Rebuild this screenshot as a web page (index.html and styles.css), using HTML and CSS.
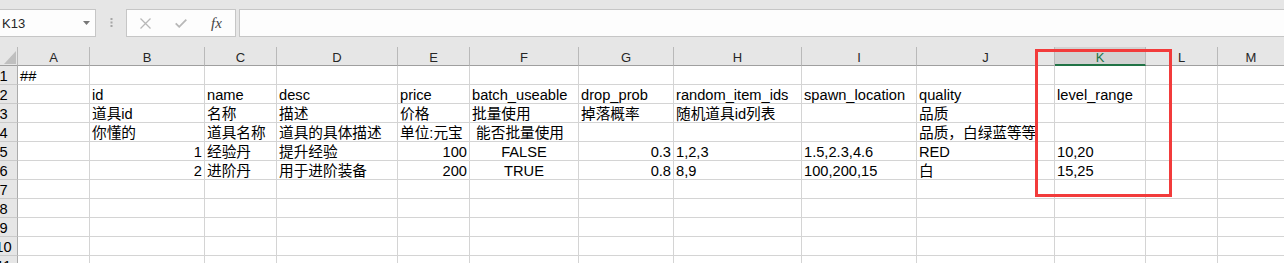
FILE: index.html
```html
<!DOCTYPE html>
<html lang="zh-CN">
<head>
  <meta charset="UTF-8" />
  <title>道具表</title>
  <link rel="stylesheet" href="styles.css">
</head>
<body>
  <div class="formula-bar">
    <div class="name-box">
      <span>K13</span>
      <svg width="7" height="4" viewBox="0 0 7 4"><polygon points="0,0 7,0 3.5,4" fill="#777"/></svg>
    </div>
    <div class="grip">
      <svg width="3" height="9" viewBox="0 0 3 9">
        <rect x="0.5" y="0" width="2" height="2" fill="#a6a6a6"/>
        <rect x="0.5" y="3.5" width="2" height="2" fill="#a6a6a6"/>
        <rect x="0.5" y="7" width="2" height="2" fill="#a6a6a6"/>
      </svg>
    </div>
    <div class="fx-buttons">
      <svg class="btn-cancel" width="11" height="11" viewBox="0 0 11 11">
        <path d="M0.5 0.5 L10.5 10.5 M10.5 0.5 L0.5 10.5" stroke="#b8b8b8" stroke-width="1.3" fill="none"/>
      </svg>
      <svg class="btn-enter" width="12" height="9" viewBox="0 0 12 9">
        <polyline points="0.7,4.3 4.2,7.8 11.3,0.7" stroke="#b8b8b8" stroke-width="1.8" fill="none"/>
      </svg>
      <span class="fx">fx</span>
    </div>
    <div class="formula-input"></div>
  </div>

  <div class="sheet">
    <div class="row col-head">
      <div class="c corner"><svg width="12" height="13" viewBox="0 0 12 13"><polygon points="12,0 12,13 0,13" fill="#bfbfbf"/></svg></div>
      <div class="c">A</div><div class="c">B</div><div class="c">C</div><div class="c">D</div><div class="c">E</div><div class="c">F</div><div class="c">G</div><div class="c">H</div><div class="c">I</div><div class="c">J</div><div class="c sel">K</div><div class="c">L</div><div class="c">M</div>
    </div>
    <div class="row">
      <div class="c rh"><span>1</span></div>
      <div class="c">##</div><div class="c"></div><div class="c"></div><div class="c"></div><div class="c"></div><div class="c"></div><div class="c"></div><div class="c"></div><div class="c"></div><div class="c"></div><div class="c"></div><div class="c"></div><div class="c"></div>
    </div>
    <div class="row">
      <div class="c rh"><span>2</span></div>
      <div class="c"></div><div class="c">id</div><div class="c">name</div><div class="c">desc</div><div class="c">price</div><div class="c">batch_useable</div><div class="c">drop_prob</div><div class="c">random_item_ids</div><div class="c">spawn_location</div><div class="c">quality</div><div class="c">level_range</div><div class="c"></div><div class="c"></div>
    </div>
    <div class="row">
      <div class="c rh"><span>3</span></div>
      <div class="c"></div><div class="c">道具id</div><div class="c">名称</div><div class="c">描述</div><div class="c">价格</div><div class="c">批量使用</div><div class="c">掉落概率</div><div class="c">随机道具id列表</div><div class="c"></div><div class="c">品质</div><div class="c"></div><div class="c"></div><div class="c"></div>
    </div>
    <div class="row">
      <div class="c rh"><span>4</span></div>
      <div class="c"></div><div class="c">你懂的</div><div class="c">道具名称</div><div class="c">道具的具体描述</div><div class="c">单位:元宝</div><div class="c"> 能否批量使用</div><div class="c"></div><div class="c"></div><div class="c"></div><div class="c">品质，白绿蓝等等</div><div class="c"></div><div class="c"></div><div class="c"></div>
    </div>
    <div class="row">
      <div class="c rh"><span>5</span></div>
      <div class="c"></div><div class="c num">1</div><div class="c">经验丹</div><div class="c">提升经验</div><div class="c num">100</div><div class="c ctr">FALSE</div><div class="c num">0.3</div><div class="c">1,2,3</div><div class="c">1.5,2.3,4.6</div><div class="c">RED</div><div class="c">10,20</div><div class="c"></div><div class="c"></div>
    </div>
    <div class="row">
      <div class="c rh"><span>6</span></div>
      <div class="c"></div><div class="c num">2</div><div class="c">进阶丹</div><div class="c">用于进阶装备</div><div class="c num">200</div><div class="c ctr">TRUE</div><div class="c num">0.8</div><div class="c">8,9</div><div class="c">100,200,15</div><div class="c">白</div><div class="c">15,25</div><div class="c"></div><div class="c"></div>
    </div>
    <div class="row">
      <div class="c rh"><span>7</span></div>
      <div class="c"></div><div class="c"></div><div class="c"></div><div class="c"></div><div class="c"></div><div class="c"></div><div class="c"></div><div class="c"></div><div class="c"></div><div class="c"></div><div class="c"></div><div class="c"></div><div class="c"></div>
    </div>
    <div class="row">
      <div class="c rh"><span>8</span></div>
      <div class="c"></div><div class="c"></div><div class="c"></div><div class="c"></div><div class="c"></div><div class="c"></div><div class="c"></div><div class="c"></div><div class="c"></div><div class="c"></div><div class="c"></div><div class="c"></div><div class="c"></div>
    </div>
    <div class="row">
      <div class="c rh"><span>9</span></div>
      <div class="c"></div><div class="c"></div><div class="c"></div><div class="c"></div><div class="c"></div><div class="c"></div><div class="c"></div><div class="c"></div><div class="c"></div><div class="c"></div><div class="c"></div><div class="c"></div><div class="c"></div>
    </div>
    <div class="row">
      <div class="c rh"><span>10</span></div>
      <div class="c"></div><div class="c"></div><div class="c"></div><div class="c"></div><div class="c"></div><div class="c"></div><div class="c"></div><div class="c"></div><div class="c"></div><div class="c"></div><div class="c"></div><div class="c"></div><div class="c"></div>
    </div>
    <div class="row">
      <div class="c rh"><span>11</span></div>
      <div class="c"></div><div class="c"></div><div class="c"></div><div class="c"></div><div class="c"></div><div class="c"></div><div class="c"></div><div class="c"></div><div class="c"></div><div class="c"></div><div class="c"></div><div class="c"></div><div class="c"></div>
    </div>
  </div>

  <div class="callout"></div>
</body>
</html>
```

FILE: styles.css
```css
html, body {
  margin: 0;
  padding: 0;
  background-color: white;
  font-family: "Liberation Sans", "Noto Sans CJK SC", sans-serif;
  overflow: hidden;
}

.formula-bar {
  display: flex;
  align-items: flex-start;
  height: 47px;
  padding-top: 9px;
  box-sizing: border-box;
  background-color: #e6e6e6;
}

.name-box {
  width: 97px;
  height: 28px;
  margin-left: -1px;
  box-sizing: border-box;
  border: 1px solid #c6c6c6;
  background-color: #fdfdfd;
  display: flex;
  align-items: center;
  justify-content: space-between;
  padding: 0 5px 0 2px;
  font-size: 13px;
  color: #262626;
}

.grip {
  width: 30px;
  display: flex;
  justify-content: center;
  margin-top: 9px;
}

.fx-buttons {
  width: 110px;
  height: 28px;
  box-sizing: border-box;
  border: 1px solid #c6c6c6;
  background-color: #fdfdfd;
  display: flex;
  align-items: center;
  padding-left: 13px;
}

.btn-enter {
  margin-left: 24px;
}

.fx {
  margin-left: 24px;
  font-family: "Liberation Serif", serif;
  font-style: italic;
  font-size: 15px;
  color: #444;
}

.formula-input {
  flex: 1;
  height: 28px;
  margin-left: 3px;
  margin-right: -1px;
  box-sizing: border-box;
  border: 1px solid #c6c6c6;
  background-color: #fdfdfd;
}

.row {
  display: grid;
  grid-template-columns: 18px 72px 115px 72px 121px 72px 109px 95px 128px 115px 138px 91px 72px 1fr;
}

.c {
  height: 19px;
  box-sizing: border-box;
  border-right: 1px solid #d4d4d4;
  border-bottom: 1px solid #d4d4d4;
  padding: 0 2px;
  font-size: 14.67px;
  line-height: 21px;
  white-space: pre;
  color: black;
}

.c:last-child {
  border-right: none;
}

.num {
  text-align: right;
}

.ctr {
  text-align: center;
}

.rh {
  background-color: #e6e6e6;
  border-right-color: #ababab;
  border-bottom-color: #cacaca;
  padding: 0;
  overflow: hidden;
}

.rh span {
  display: block;
  width: 27px;
  margin-left: -10px;
  text-align: center;
}

.col-head .c {
  background-color: #e6e6e6;
  border-right-color: #b9b9b9;
  border-bottom-color: #9f9f9f;
  text-align: center;
  font-size: 13px;
  color: #262626;
}

.col-head .corner {
  display: flex;
  justify-content: flex-end;
  align-items: flex-end;
  padding: 0 1px 1px 0;
}

.col-head .sel {
  background-color: #d2d2d2;
  color: #217346;
  border-bottom: 2px solid #217346;
}

.callout {
  position: absolute;
  left: 1035px;
  top: 49px;
  width: 137px;
  height: 148px;
  box-sizing: border-box;
  border: 3px solid #f23b3b;
}
```
